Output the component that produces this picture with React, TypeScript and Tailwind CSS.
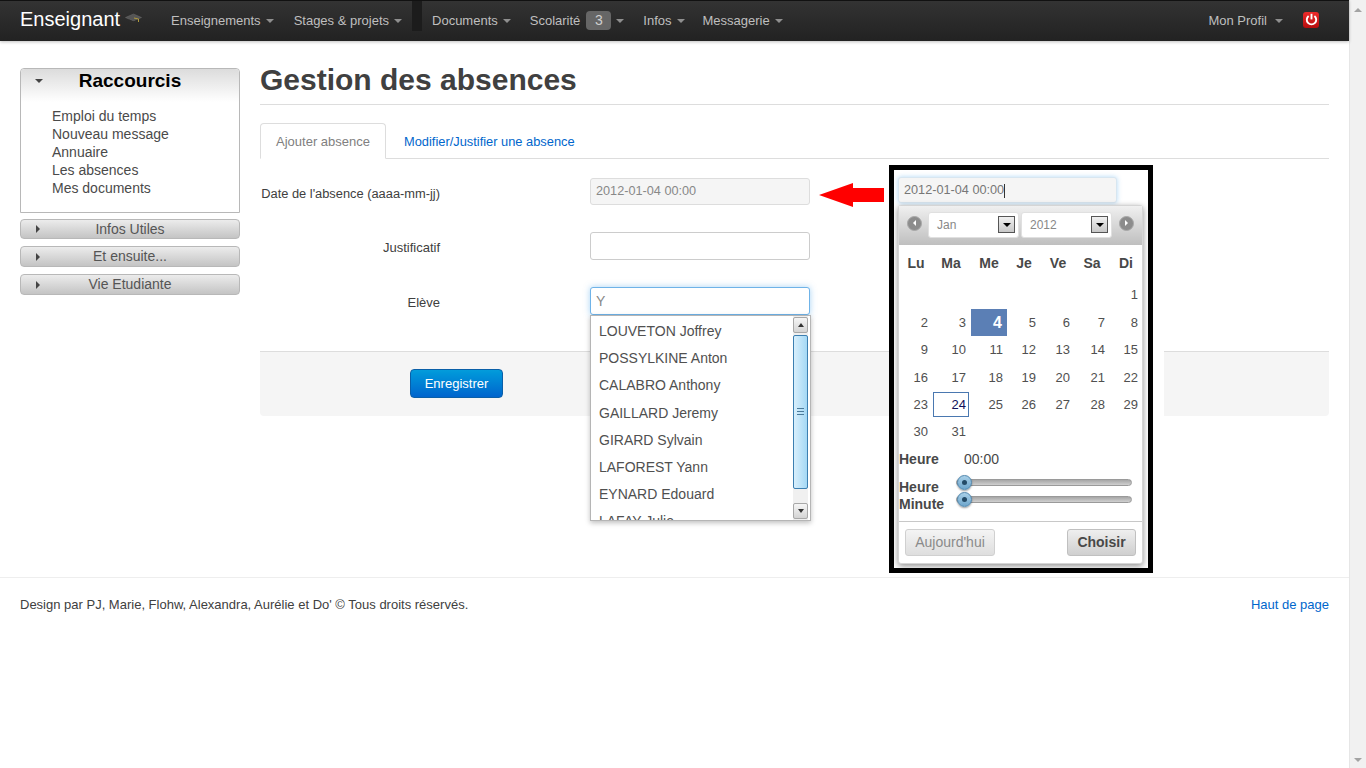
import React, { FC } from "react";

const FONT = "font-['Liberation_Sans',Arial,sans-serif]";

const Caret: FC<{ className?: string }> = ({ className = "" }) => (
  <span
    className={`inline-block w-0 h-0 border-x-[4px] border-t-[4px] border-x-transparent border-t-[#8f8f8f] ${className}`}
  />
);

const SideArrow: FC = () => (
  <span className="inline-block w-0 h-0 border-y-[4px] border-l-[4px] border-y-transparent border-l-[#444]" />
);

const NavItem: FC<{ label: string; className?: string; badge?: string }> = ({
  label,
  className = "",
  badge,
}) => (
  <div className={`flex items-center text-[13px] text-[#bfbfbf] ${className}`}>
    <span>{label}</span>
    {badge && (
      <span className="ml-[6px] w-[25px] h-[19px] rounded-[4px] bg-[#666666] text-[#cfcfcf] text-[14px] flex items-center justify-center">
        {badge}
      </span>
    )}
    <Caret className="ml-[5px]" />
  </div>
);

const CapIcon: FC = () => (
  <svg width="17" height="12" viewBox="0 0 17 12" className="ml-[5px] mb-[3px]">
    <path d="M8.5 1 L16.5 4.5 L8.5 8 L0.5 4.5 Z" fill="#555" stroke="#6e6e6e" strokeWidth="0.5" />
    <path d="M4 6.5 V9 C6 11 11 11 13 9 V6.5 L8.5 8.5 Z" fill="#2b2b2b" />
    <path d="M9 5 L13.5 6 V9" fill="none" stroke="#b09a3c" strokeWidth="1" />
  </svg>
);

const PowerIcon: FC = () => (
  <span className="w-[16px] h-[16px] mb-[2px] rounded-[3px] bg-gradient-to-b from-[#ee2a2a] to-[#b40c0c] flex items-center justify-center">
    <svg width="13" height="13" viewBox="0 0 13 13" fill="none" stroke="#fff" strokeWidth="1.9">
      <path d="M3.6 3 A4.7 4.7 0 1 0 9.4 3" />
      <path d="M6.5 0.8 V6.4" />
    </svg>
  </span>
);

const Navbar: FC = () => (
  <div className="h-[41px] shrink-0 flex items-start bg-gradient-to-b from-[#333333] to-[#222222] border-t border-[#111] shadow-[0_1px_3px_rgba(0,0,0,0.25)] relative z-10">
    <div className="h-[39px] flex items-center pl-[20px] w-[171px]">
      <span className="text-[20px] text-white leading-none mb-[3px]">Enseignant</span>
      <CapIcon />
    </div>
    <div className="h-[39px] flex items-center">
      <NavItem label="Enseignements" />
      <NavItem label="Stages & projets" className="ml-[20px]" />
      <div className="w-[10px] h-[30px] self-start bg-[#1c1c1c] ml-[10px]" />
      <NavItem label="Documents" className="ml-[10px]" />
      <NavItem label="Scolarité" badge="3" className="ml-[19px]" />
      <NavItem label="Infos" className="ml-[19px]" />
      <NavItem label="Messagerie" className="ml-[18px]" />
    </div>
    <div className="ml-auto h-[39px] flex items-center pr-[30px]">
      <NavItem label="Mon Profil" className="[&>span:last-child]:ml-[8px]" />
      <div className="ml-[20px] flex">
        <PowerIcon />
      </div>
    </div>
  </div>
);

const Accordion: FC<{ label: string; h: string; mt: string }> = ({ label, h, mt }) => (
  <div
    className={`${h} ${mt} relative flex items-center justify-center rounded-[4px] border border-[#b8b8b8] bg-gradient-to-b from-[#ececec] to-[#c4c4c4] text-[14px] text-[#555]`}
  >
    <span className="absolute left-[15px] top-[50%] -translate-y-1/2 flex">
      <SideArrow />
    </span>
    {label}
  </div>
);

const Sidebar: FC = () => (
  <div className="w-[220px] shrink-0 pt-[27px]">
    <div className="h-[145px] rounded-t-[4px] border border-[#b8b8b8] bg-white">
      <div className="h-[33px] rounded-t-[4px] bg-gradient-to-b from-[#dcdcdc] to-white relative flex items-center justify-center pb-[9px] pt-[1px]">
        <Caret className="absolute left-[14px] top-[10px] border-t-[#444]" />
        <span className="text-[19px] font-bold text-black">Raccourcis</span>
      </div>
      <div className="pl-[31px] pt-[5px] text-[14px] leading-[18px] text-[#4a4a4a]">
        <div>Emploi du temps</div>
        <div>Nouveau message</div>
        <div>Annuaire</div>
        <div>Les absences</div>
        <div>Mes documents</div>
      </div>
    </div>
    <Accordion label="Infos Utiles" h="h-[20px]" mt="mt-[6px]" />
    <Accordion label="Et ensuite..." h="h-[21px]" mt="mt-[7px]" />
    <Accordion label="Vie Etudiante" h="h-[21px]" mt="mt-[7px]" />
  </div>
);

const Field: FC<{
  label: string;
  className?: string;
  labelClass?: string;
  inputClass: string;
  value?: string;
}> = ({ label, className = "", labelClass = "text-[13px]", inputClass, value }) => (
  <div className={`flex items-center ${className}`}>
    <label className={`w-[180px] pt-[4px] text-right whitespace-nowrap text-[#404040] ${labelClass}`}>{label}</label>
    <div
      className={`ml-[150px] w-[220px] pt-px rounded-[3px] border flex items-center px-[5px] text-[12.7px] ${inputClass}`}
    >
      {value}
    </div>
  </div>
);

const Content: FC = () => (
  <div className="flex-1 ml-[20px] mr-[20px]">
    <div className="pt-[22px] h-[64px] border-b border-[#ddd]">
      <h1 className="text-[30px] leading-[34px] font-bold text-[#404040]">Gestion des absences</h1>
    </div>
    <div className="mt-[18px] h-[36px] border-b border-[#ddd] flex items-end text-[13px]">
      <div className="w-[126px] h-[36px] -mb-px pt-[2px] bg-white border border-b-white border-[#ddd] rounded-t-[4px] flex items-center justify-center text-[#808080]">
        Ajouter absence
      </div>
      <div className="ml-[18px] h-[35px] pt-[2px] flex items-center text-[12.85px] text-[#0066cc]">
        Modifier/Justifier une absence
      </div>
    </div>
    <Field
      label="Date de l'absence (aaaa-mm-jj)"
      labelClass="text-[12.85px]"
      className="mt-[19px] h-[27px]"
      inputClass="h-[27px] bg-[#f5f5f5] border-[#ddd] text-[#888]"
      value="2012-01-04 00:00"
    />
    <Field label="Justificatif" className="mt-[27px] h-[28px]" inputClass="h-[28px] bg-white border-[#ccc]" />
    <Field
      label="Elève"
      className="mt-[27px] h-[28px]"
      inputClass="h-[28px] bg-white border-[#6fb3e8] shadow-[0_0_6px_rgba(82,168,236,0.5)] text-[#888] text-[14px]"
      value="Y"
    />
    <div className="mt-[36px] h-[65px] bg-[#f5f5f5] border-t border-[#ddd] rounded-b-[4px] pt-[17px] pl-[150px]">
      <button className="w-[93px] h-[29px] rounded-[4px] border border-[#0a5fa8] bg-gradient-to-b from-[#049cdb] to-[#0064cd] text-white text-[13px]">
        Enregistrer
      </button>
    </div>
  </div>
);

const names = [
  "LOUVETON Joffrey",
  "POSSYLKINE Anton",
  "CALABRO Anthony",
  "GAILLARD Jeremy",
  "GIRARD Sylvain",
  "LAFOREST Yann",
  "EYNARD Edouard",
  "LAFAY Julie",
];

const ScrollBtn: FC<{ up?: boolean }> = ({ up }) => (
  <div className="h-[16px] w-[15px] rounded-[2px] border border-[#a8a8a8] bg-gradient-to-b from-[#f6f6f6] to-[#d4d4d4] flex items-center justify-center">
    <span
      className={`w-0 h-0 border-x-[3px] border-x-transparent ${
        up ? "border-b-[4px] border-b-[#333]" : "border-t-[4px] border-t-[#333]"
      }`}
    />
  </div>
);

const Autocomplete: FC = () => (
  <div className="absolute left-[590px] top-[315px] w-[221px] h-[206px] bg-white border border-[#b5b5b5] shadow-[0_2px_5px_rgba(0,0,0,0.25)] overflow-hidden flex">
    <div className="flex-1 pl-[8px] pt-[2px] text-[14px] text-[#505050]">
      {names.map((n) => (
        <div key={n} className="h-[27.2px] leading-[27px] whitespace-nowrap">
          {n}
        </div>
      ))}
    </div>
    <div className="w-[15px] mr-[2px] pt-[1px] flex flex-col bg-[#f0f0f0]">
      <ScrollBtn up />
      <div className="mt-[2px] h-[154px] w-[15px] rounded-[2px] border border-[#3c7fb1] bg-gradient-to-r from-[#d8effc] to-[#a4d8f5] flex items-center justify-center">
        <span className="w-[7px] h-[7px] mb-[2px] border-y border-[#4a7a9a] flex items-center">
          <span className="w-full h-px bg-[#4a7a9a]" />
        </span>
      </div>
      <div className="mt-auto mb-[1px]">
        <ScrollBtn />
      </div>
    </div>
  </div>
);

const dayHeads = ["Lu", "Ma", "Me", "Je", "Ve", "Sa", "Di"];
const days: (number | null)[] = [null, null, null, null, null, null, 1];
for (let i = 2; i <= 31; i++) days.push(i);

const NavRound: FC<{ right?: boolean }> = ({ right }) => (
  <span className="w-[15px] h-[15px] mb-[3px] rounded-full bg-[#8c8c8c] border border-[#a8a8a8] flex items-center justify-center">
    <span
      className={`w-0 h-0 border-y-[3px] border-y-transparent ${
        right ? "border-l-[3px] border-l-white" : "border-r-[3px] border-r-white"
      }`}
    />
  </span>
);

const MiniSelect: FC<{ value: string; w: string }> = ({ value, w }) => (
  <div
    className={`${w} h-[26px] bg-white rounded-[3px] flex items-center justify-between pl-[8px] pr-[3px] text-[12px] text-[#888] border border-[#e0e0e0]`}
  >
    {value}
    <span className="w-[17px] h-[17px] border border-[#555] bg-gradient-to-b from-[#f0f0f0] to-[#c8c8c8] flex items-center justify-center">
      <span className="w-0 h-0 border-x-[4px] border-t-[4px] border-x-transparent border-t-black" />
    </span>
  </div>
);

const Slider: FC<{ className?: string }> = ({ className = "" }) => (
  <div
    className={`relative h-[7px] w-[176px] rounded-full bg-gradient-to-b from-[#a6a6a6] to-[#d0d0d0] border border-[#9a9a9a] ${className}`}
  >
    <span className="absolute left-0 top-[-5px] w-[15px] h-[15px] rounded-full border border-[#4f86ad] bg-gradient-to-b from-[#a9d0e8] to-[#6ea6cc] shadow-[0_1px_2px_rgba(0,0,0,0.4)] flex items-center justify-center">
      <span className="w-[5px] h-[5px] rounded-full bg-[#234a66]" />
    </span>
  </div>
);

const Calendar: FC = () => (
  <div className="absolute left-[889px] top-[165px] w-[264px] h-[408px] border-[5px] border-black bg-white">
    <div className="ml-[4px] mt-[7px] w-[219px] h-[26px] pt-[2px] bg-[#f5f5f5] border border-[#d8e6f0] rounded-[3px] shadow-[0_0_5px_rgba(82,168,236,0.45)] flex items-center pl-[5px] text-[12.7px] text-[#777]">
      2012-01-04 00:00
      <span className="w-px h-[14px] bg-[#333]" />
    </div>
    <div className="ml-[4px] mt-[2px] w-[245px] h-[359px] bg-white border border-[#d5d5d5] rounded-[3px] shadow-[0_2px_6px_rgba(0,0,0,0.45)]">
      <div className="h-[39px] bg-gradient-to-b from-[#f0f0f0] to-[#bfbfbf] flex items-center pl-[8px] pr-[8px] pb-[2px]">
        <NavRound />
        <div className="ml-[6px]">
          <MiniSelect value="Jan" w="w-[91px]" />
        </div>
        <div className="ml-[2px]">
          <MiniSelect value="2012" w="w-[91px]" />
        </div>
        <div className="ml-[7px]">
          <NavRound right />
        </div>
      </div>
      <div className="grid grid-cols-[34px_36px_40px_30px_38px_30px_38px] h-[36px] items-center text-[14px] font-bold text-[#484848] pt-[1px]">
        {dayHeads.map((d) => (
          <div key={d} className="text-center">
            {d}
          </div>
        ))}
      </div>
      <div className="grid grid-cols-[33px_38px_37px_33px_34px_35px_33px] grid-rows-[28px_27px_28px_27px_27px_27px] text-[13px] text-[#505050]">
        {days.map((d, i) => (
          <div
            key={i}
            className={`flex items-center justify-end ${
              d === 4
                ? "bg-[#5b7fb5] text-white font-bold text-[16px] pr-[5px] ml-px"
                : d === 24
                  ? "border border-[#4a78b0] h-[25px] self-center text-[#10105a] mx-px pr-[2px]"
                  : "pr-[4px]"
            }`}
          >
            {d}
          </div>
        ))}
      </div>
      <div className="h-[27px] mt-[1px] flex items-center text-[14px] text-[#484848]">
        <span className="font-bold w-[65px]">Heure</span>
        <span>00:00</span>
      </div>
      <div className="mt-[5px] h-[36px] flex">
        <div className="w-[58px] text-[14px] font-bold text-[#484848] leading-[17px]">
          <div className="pt-[1px]">Heure</div>
          <div>Minute</div>
        </div>
        <div className="-ml-px">
          <Slider className="mt-[1px]" />
          <Slider className="mt-[10px]" />
        </div>
      </div>
      <div className="mt-[7px] h-[43px] pb-[2px] border-t border-[#c8c8c8] flex items-center justify-between px-[6px]">
        <span className="w-[90px] h-[27px] rounded-[3px] border border-[#d0d0d0] bg-gradient-to-b from-[#f4f4f4] to-[#dedede] flex items-center justify-center text-[14px] text-[#8a8a8a]">
          Aujourd'hui
        </span>
        <span className="w-[69px] h-[27px] rounded-[3px] border border-[#c0c0c0] bg-gradient-to-b from-[#efefef] to-[#cfcfcf] flex items-center justify-center text-[14px] font-bold text-[#484848]">
          Choisir
        </span>
      </div>
    </div>
  </div>
);

const RedArrow: FC = () => (
  <svg width="65" height="24" viewBox="0 0 65 24" className="absolute left-[819px] top-[183px]">
    <path d="M0 12 L34 0 V5 H65 V19 H34 V24 Z" fill="#ff0000" />
  </svg>
);

const Scrollbar: FC = () => (
  <div className="w-[17px] shrink-0 bg-[#f1f1f1] border-l border-[#e6e6e6] flex flex-col items-center justify-between pt-[8px] pb-[6px]">
    <span className="w-0 h-0 border-x-[4px] border-b-[4px] border-x-transparent border-b-[#a3a3a3]" />
    <span className="w-0 h-0 border-x-[4px] border-t-[4px] border-x-transparent border-t-[#a3a3a3]" />
  </div>
);

const App: FC = () => {
  return (
    <div className={`relative flex h-screen overflow-hidden bg-white ${FONT}`}>
      <div className="flex-1 flex flex-col min-w-0">
        <Navbar />
        <div className="h-[536px] shrink-0 flex pl-[20px]">
          <Sidebar />
          <Content />
        </div>
        <div className="h-[54px] shrink-0 border-t border-[#eee] flex items-center justify-between px-[20px] text-[13px] text-[#404040]">
          <span>Design par PJ, Marie, Flohw, Alexandra, Aurélie et Do' © Tous droits réservés.</span>
          <span className="text-[#0066cc]">Haut de page</span>
        </div>
      </div>
      <Scrollbar />
      <div className="absolute left-[1153px] top-[351px] w-[11px] h-[66px] bg-white" />
      <RedArrow />
      <Autocomplete />
      <Calendar />
    </div>
  );
};

export default App;
